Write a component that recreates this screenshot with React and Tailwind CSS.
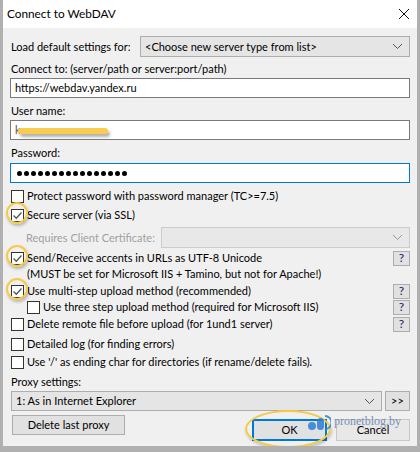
import React from "react";

const font = { fontFamily: 'Lato, "Noto Sans", "Liberation Sans", sans-serif' };

function Chevron({ color = "#555" }) {
  return (
    <svg width="11" height="7" viewBox="0 0 11 7" fill="none">
      <path d="M1 1l4.5 4.5L10 1" stroke={color} strokeWidth="1" />
    </svg>
  );
}

function Check({ checked }) {
  return (
    <span className="relative inline-flex h-[13px] w-[13px] shrink-0 items-center justify-center border border-[#333] bg-white">
      {checked && (
        <svg width="11" height="11" viewBox="0 0 11 11" fill="none">
          <path d="M1.5 5.5l2.8 2.8L9.5 2.5" stroke="#555" strokeWidth="1.3" />
        </svg>
      )}
    </span>
  );
}

function Ring() {
  // yellow highlight circles drawn over the screenshot
  return (
    <span className="pointer-events-none absolute left-[-5px] top-[-5px] h-[22px] w-[22px] rounded-full border-2 border-[#f7c948] shadow-[1px_2px_3px_rgba(0,0,0,0.25)]" />
  );
}

function Help() {
  return (
    <span className="flex h-[15px] w-[17px] items-center justify-center border border-[#adadad] bg-[#e1e1e1] text-[12px] leading-none text-[#1e1e5c]">
      ?
    </span>
  );
}

function CheckRow({ checked, children, help, indent, ring, className = "" }) {
  return (
    <div className={`flex h-[16px] items-center justify-between ${indent ? "pl-[17px]" : "pl-[1px]"} ${className}`}>
      <div className="relative flex items-center gap-[3px]">
        <Check checked={checked} />
        <span className="whitespace-nowrap">{children}</span>
        {ring && <Ring />}
      </div>
      {help && <Help />}
    </div>
  );
}

const dots = Array.from({ length: 16 });

export default function App() {
  return (
    <div
      className="relative h-[452px] w-[420px] overflow-hidden border-[3px] border-b-[6px] border-t-0 border-[#b0b0b0] bg-[#f0f0f0] text-[11px] leading-[16px] text-black"
      style={font}
    >
      {/* Title bar */}
      <div className="flex h-[28px] items-center justify-between bg-white pl-[4px] pr-[7px]">
        <span className="text-[11.8px]">Connect to WebDAV</span>
        <svg width="12" height="12" viewBox="0 0 12 12">
          <path d="M1 1l10 10M11 1L1 11" stroke="#111" strokeWidth="1" />
        </svg>
      </div>

      <div className="flex flex-col pl-[7px] pr-[7px] pt-[8px]">
        {/* Load default settings */}
        <div className="flex h-[21px] items-center justify-between">
          <span className="whitespace-nowrap pl-[1px]">Load default settings for:</span>
          <div className="flex h-[21px] w-[270px] items-center justify-between border border-[#adadad] bg-[#e5e5e5] pl-[4px] pr-[6px]">
            <span>&lt;Choose new server type from list&gt;</span>
            <Chevron />
          </div>
        </div>

        <div className="mt-[4px] h-[16px] pl-[1px]">Connect to: (server/path or server:port/path)</div>
        <div className="mt-[1px] flex h-[20px] items-center border border-[#7a7a7a] bg-white pl-[4px]">
          https://webdav.yandex.ru
        </div>

        <div className="mt-[5px] h-[16px] pl-[1px]">User name:</div>
        <div className="relative mt-[1px] flex h-[20px] items-center border border-[#7a7a7a] bg-white pl-[4px]">
          <span className="text-[#555]">k</span>
          <span className="pointer-events-none absolute left-[7px] top-[7px] h-[6px] w-[90px] rounded-full bg-[#f9cd4f] shadow-[2px_3px_3px_rgba(0,0,0,0.3)]" />
        </div>

        <div className="mt-[5px] h-[16px] pl-[1px]">Password:</div>
        <div className="mt-[2px] flex h-[20px] items-center gap-[2px] border border-[#0078d7] bg-white pl-[6px]">
          {dots.map((_, i) => (
            <span key={i} className="h-[5px] w-[5px] rounded-full bg-black" />
          ))}
        </div>

        {/* checkboxes */}
        <CheckRow className="mt-[5px]">Protect password with password manager (TC&gt;=7.5)</CheckRow>
        <CheckRow className="mt-[3px]" checked ring>Secure server (via SSL)</CheckRow>

        <div className="mt-[4px] flex h-[21px] items-center justify-between">
          <span className="whitespace-nowrap pl-[16px] text-[#a0a0a0]">Requires Client Certificate:</span>
          <div className="flex h-[21px] w-[249px] items-center justify-end border border-[#cccccc] bg-[#e8e8e8] pr-[6px]">
            <Chevron color="#999" />
          </div>
        </div>

        <CheckRow className="mt-[2px] h-[15px]" checked help ring>Send/Receive accents in URLs as UTF-8 Unicode</CheckRow>
        <div className="h-[15px] pl-[17px]">(MUST be set for Microsoft IIS + Tamino, but not for Apache!)</div>
        <CheckRow className="mt-[2px]" checked help ring>Use multi-step upload method (recommended)</CheckRow>
        <CheckRow help indent>Use three step upload method (required for Microsoft IIS)</CheckRow>
        <CheckRow className="mt-[1px]" help>Delete remote file before upload (for 1und1 server)</CheckRow>
        <CheckRow className="mt-[4px]">Detailed log (for finding errors)</CheckRow>
        <CheckRow className="mt-[2px]">Use '/' as ending char for directories (if rename/delete fails).</CheckRow>

        <div className="mt-[4px] h-[16px] pl-[1px]">Proxy settings:</div>
        <div className="mt-[1px] flex h-[20px] gap-[3px] pl-[1px]">
          <div className="flex flex-1 items-center justify-between border border-[#adadad] bg-[#e5e5e5] pl-[4px] pr-[6px]">
            <span>1: As in Internet Explorer</span>
            <Chevron />
          </div>
          <div className="flex w-[25px] items-center justify-center border border-[#adadad] bg-[#e1e1e1]">&gt;&gt;</div>
        </div>

        <div className="relative mt-[4px] flex items-start justify-between pl-[2px]">
          <div className="flex h-[20px] w-[113px] items-center justify-center border border-[#adadad] bg-[#e1e1e1]">
            Delete last proxy
          </div>
          <div className="mt-[4px] flex gap-[9px]">
            <div className="flex h-[22px] w-[75px] items-center justify-center border-2 border-[#0078d7] bg-[#e1e1e1]">
              OK
            </div>
            <div className="flex h-[22px] w-[74px] items-center justify-center border border-[#c8c8c8] bg-[#e8e8e8]">
              Cancel
            </div>
          </div>
          {/* highlight around OK */}
          <span className="pointer-events-none absolute left-[235px] top-[-5px] h-[38px] w-[86px] rounded-[50%] border-2 border-[#f7c948] shadow-[1px_2px_3px_rgba(0,0,0,0.2)]" />
          {/* watermark */}
          <div className="pointer-events-none absolute left-[297px] top-[-1px] flex items-start gap-[3px] opacity-85">
            <svg width="24" height="18" viewBox="0 0 24 18">
              <circle cx="5" cy="12" r="4" fill="#2b7fd6" />
              <rect x="10" y="4" width="7" height="12" rx="3.5" fill="#2b7fd6" />
              <path d="M18 2a6.5 6.5 0 0 1 0 13" fill="none" stroke="#2b7fd6" strokeWidth="2" />
            </svg>
            <span className="text-[12px] leading-[14px] text-[#6a7fb0]" style={{ fontFamily: '"Liberation Serif", serif' }}>
              pronetblog.by
            </span>
          </div>
        </div>
      </div>
    </div>
  );
}
